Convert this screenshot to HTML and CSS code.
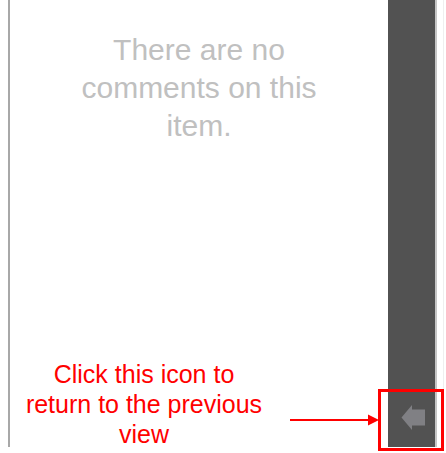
FILE: index.html
```html
<!DOCTYPE html>
<html>
<head>
<meta charset="utf-8">
<link rel="stylesheet" href="styles.css">
</head>
<body>
<div class="app">
  <main class="main">
    <p class="empty">There are no comments on this item.</p>
  </main>
  <aside class="sidebar">
    <button class="back" aria-label="Back">
      <svg width="24" height="27" viewBox="0 0 24 27"><path d="M0.5 13.5 L11 1 L11 5.5 L24 5.5 L24 21.5 L11 21.5 L11 26 Z" fill="#808084"/></svg>
    </button>
  </aside>
</div>
<div class="note">Click this icon to return to the previous view</div>
<svg class="pointer" width="92" height="14" viewBox="0 0 92 14"><line x1="0" y1="7" x2="80" y2="7" stroke="#f00" stroke-width="2"/><path d="M78 1.5 L89 7 L78 12.5 Z" fill="#f00"/></svg>
<div class="highlight"></div>
</body>
</html>
```
FILE: styles.css
```css
html, body {
  margin: 0;
  padding: 0;
  background: #fff;
  font-family: "Liberation Sans", Arial, Helvetica, sans-serif;
}
body {
  position: relative;
  width: 446px;
  height: 453px;
  overflow: hidden;
}
.app {
  display: flex;
  width: 437px;
  height: 447px;
  padding-right: 6px;
  border-right: 1px solid #efefef;
}
.main {
  flex: 1;
  margin-left: 8px;
  border-left: 2px solid #a8a8a8;
  padding: 31px 60px 0;
}
.empty {
  margin: 0;
  font-size: 30px;
  line-height: 38px;
  color: #c0c0c0;
  text-align: center;
}
.sidebar {
  width: 49px;
  background: #525252;
  border-right: 2px solid #c6c6c6;
  display: flex;
  flex-direction: column;
  justify-content: flex-end;
  align-items: center;
  padding-bottom: 16px;
  box-sizing: border-box;
}
.back {
  border: 0;
  background: none;
  padding: 0 0 0 2px;
  margin: 0;
  line-height: 0;
}
.note {
  position: absolute;
  left: 24px;
  top: 359px;
  width: 240px;
  font-size: 25px;
  line-height: 30px;
  color: #f00;
  text-align: center;
}
.pointer {
  position: absolute;
  left: 290px;
  top: 413px;
}
.highlight {
  position: absolute;
  left: 378px;
  top: 389px;
  width: 60px;
  height: 56px;
  border: 3px solid #f00;
}
```
